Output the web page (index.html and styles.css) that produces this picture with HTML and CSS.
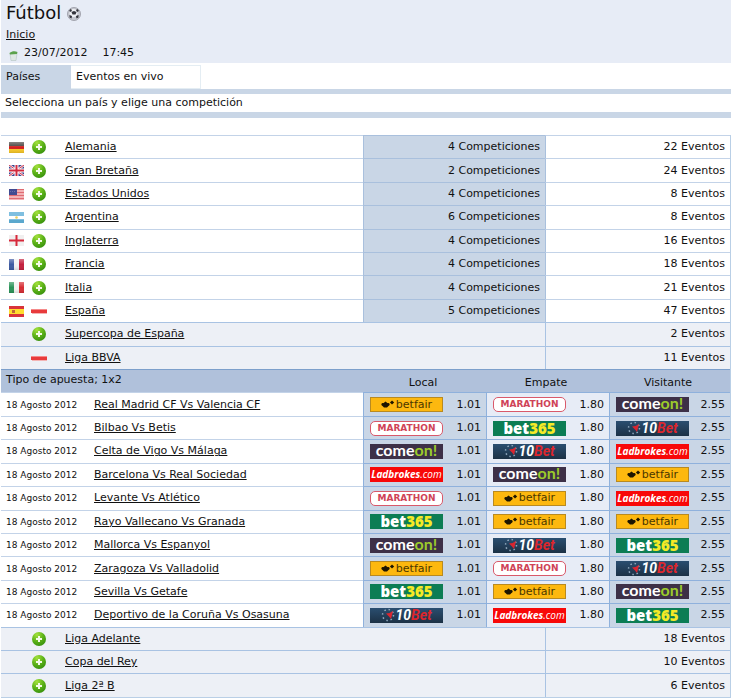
FILE: index.html
```html
<!DOCTYPE html>
<html lang="es">
<head>
<meta charset="utf-8">
<title>Fútbol</title>
<link rel="stylesheet" href="styles.css">
</head>
<body>
<svg class="sprites" aria-hidden="true">
  <defs>
    <radialGradient id="green" cx="35%" cy="20%" r="85%"><stop offset="0" stop-color="#a4e23c"/><stop offset=".55" stop-color="#5cb218"/><stop offset="1" stop-color="#37900c"/></radialGradient>
    <linearGradient id="shine" x1="0" y1="0" x2="0" y2="1"><stop offset="0" stop-color="#fff" stop-opacity=".35"/><stop offset=".5" stop-color="#fff" stop-opacity="0"/><stop offset="1" stop-color="#000" stop-opacity=".12"/></linearGradient>
  </defs>
  <symbol id="plus" viewBox="0 0 16 16"><circle cx="8" cy="8" r="7" fill="url(#green)"/><path d="M8 5v6M5 8h6" stroke="#f4fbe9" stroke-width="2"/></symbol>
  <symbol id="minus" viewBox="0 0 16 16"><path d="M0 6h16v4H0z" fill="#e83a3c"/><path d="M0 6h16v1H0z" fill="#f58a8a"/><path d="M1 10h15v1H1z" fill="#f3b4b4"/></symbol>
  <symbol id="de" viewBox="0 0 15 11"><path d="M0 0h15v4H0z" fill="#45403c"/><path d="M0 4h15v3H0z" fill="#d3201f"/><path d="M0 7h15v4H0z" fill="#f8c828"/><path d="M0 0h15v11H0z" fill="url(#shine)"/></symbol>
  <symbol id="gb" viewBox="0 0 15 11"><path d="M0 0h15v11H0z" fill="#34418c"/><path d="M0 0l15 11M15 0L0 11" stroke="#f3dfe6" stroke-width="2.6"/><path d="M0 0l15 11M15 0L0 11" stroke="#cf3a50"/><path d="M7.500 0v11M0 5.500h15" stroke="#fff" stroke-width="4"/><path d="M7.500 0v11M0 5.500h15" stroke="#d22a3e" stroke-width="2"/></symbol>
  <symbol id="us" viewBox="0 0 15 11"><path d="M0 0h15v11H0z" fill="#f2b2b5"/><path d="M0 .5h15M0 3.500h15M0 6.500h15M0 9.500h15" stroke="#df6b72"/><path d="M0 0h8v6H0z" fill="#414b91"/><path d="M1 2.500h6" stroke="#6870ab" stroke-dasharray="1 1"/></symbol>
  <symbol id="ar" viewBox="0 0 15 11"><path d="M0 0h15v11H0z" fill="#7fbfe0"/><path d="M0 4h15v3H0z" fill="#fff"/><circle cx="7.500" cy="5.500" r="1.300" fill="#e8d060"/><path d="M0 8h15v3H0z" fill="#5ba8cd"/></symbol>
  <symbol id="en" viewBox="0 0 15 11"><path d="M0 0h15v11H0z" fill="#f1efef"/><path d="M7.500 0v11M0 5.500h15" stroke="#d7283a" stroke-width="2"/></symbol>
  <symbol id="fr" viewBox="0 0 15 11"><path d="M0 0h5v11H0z" fill="#3d5aa2"/><path d="M5 0h5v11H5z" fill="#f1f1f3"/><path d="M10 0h5v11h-5z" fill="#c4203e"/><path d="M0 0h15v11H0z" fill="url(#shine)"/></symbol>
  <symbol id="it" viewBox="0 0 15 11"><path d="M0 0h5v11H0z" fill="#2a9358"/><path d="M5 0h5v11H5z" fill="#f3f3f1"/><path d="M10 0h5v11h-5z" fill="#d72d34"/><path d="M0 0h15v11H0z" fill="url(#shine)"/></symbol>
  <symbol id="es" viewBox="0 0 15 11"><path d="M0 0h15v11H0z" fill="#d9333a"/><path d="M0 3h15v5H0z" fill="#ffdd2e"/><path d="M3 4h3v3H3z" fill="#c06a35"/></symbol>
  <symbol id="arrows" viewBox="0 0 14 9"><path d="M1.500 4L4.500 1.500 7.500 4v2L6 7.500H3L1.500 6z" fill="#1d1500"/><circle cx="1.800" cy="4.500" r="1.400" fill="#1d1500"/><circle cx="7.200" cy="4.500" r="1.400" fill="#1d1500"/><path d="M11 .5L13.200 2.500 11 4.500 8.900 2.500z" fill="#1d1500"/></symbol>
  <symbol id="stars" viewBox="0 0 14 14"><circle cx="7" cy="7" r="5.500" fill="none" stroke="#8fa8bd" stroke-width="1.500" stroke-dasharray="1.500 2.800"/><path d="M5 5.500l3.500-.5L12 3l-1 4-1 4-2-2.500z" fill="#d82630"/></symbol>
</svg>

<header class="top">
  <h1 class="title">Fútbol
    <svg class="ball" viewBox="0 0 14 14" aria-hidden="true"><circle cx="7" cy="7" r="6.500" fill="#c6c8d0" stroke="#a2a4ae"/><circle cx="6.500" cy="6" r="4" fill="#eff0f4"/><path d="M4.500 5l2.500-1 2.500 1-1 2.500H5.500zM2 4l1.500-2 1.500 1-1 2zM12 4l-1.500-2L9 3l1 2zM2.500 8L5 9l-.5 2.500-2-1zM11.500 8L9 9l.5 2.500 2-1z" fill="#33343b"/></svg>
  </h1>
  <a class="home" href="#">Inicio</a>
  <p class="when">
    <svg class="bin" viewBox="0 0 9 11" aria-hidden="true"><path d="M1 3h7l-1 7H2z" fill="#dfe8e4" stroke="#b3c4c2" stroke-width=".6"/><path d="M.5 2.500C3 .5 6 .5 8.500 1.500l-.5 2L1 4z" fill="#5ca24c"/></svg>
    <span>23/07/2012</span><span class="time">17:45</span>
  </p>
</header>
<nav class="tabs">
  <a class="tab current" href="#">Países</a>
  <a class="tab live" href="#">Eventos en vivo</a>
</nav>
<p class="hint">Selecciona un país y elige una competición</p>

<main class="board">
<table class="list">
  <colgroup><col class="c-icons"><col class="c-date"><col class="c-match"><col class="c-local"><col class="c-draw-a"><col class="c-draw-b"><col class="c-away"></colgroup>
  <tbody>
  <tr><td><div class="icons"><svg class="flag"><use href="#de"/></svg><button class="toggle" aria-label="Abrir Alemania"><svg><use href="#plus"/></svg></button></div></td><td class="name" colspan="2"><a href="#">Alemania</a></td><td class="comps" colspan="2">4 Competiciones</td><td class="events" colspan="2">22 Eventos</td></tr>
  <tr><td><div class="icons"><svg class="flag"><use href="#gb"/></svg><button class="toggle" aria-label="Abrir Gran Bretaña"><svg><use href="#plus"/></svg></button></div></td><td class="name" colspan="2"><a href="#">Gran Bretaña</a></td><td class="comps" colspan="2">2 Competiciones</td><td class="events" colspan="2">24 Eventos</td></tr>
  <tr><td><div class="icons"><svg class="flag"><use href="#us"/></svg><button class="toggle" aria-label="Abrir Estados Unidos"><svg><use href="#plus"/></svg></button></div></td><td class="name" colspan="2"><a href="#">Estados Unidos</a></td><td class="comps" colspan="2">4 Competiciones</td><td class="events" colspan="2">8 Eventos</td></tr>
  <tr><td><div class="icons"><svg class="flag"><use href="#ar"/></svg><button class="toggle" aria-label="Abrir Argentina"><svg><use href="#plus"/></svg></button></div></td><td class="name" colspan="2"><a href="#">Argentina</a></td><td class="comps" colspan="2">6 Competiciones</td><td class="events" colspan="2">8 Eventos</td></tr>
  <tr><td><div class="icons"><svg class="flag"><use href="#en"/></svg><button class="toggle" aria-label="Abrir Inglaterra"><svg><use href="#plus"/></svg></button></div></td><td class="name" colspan="2"><a href="#">Inglaterra</a></td><td class="comps" colspan="2">4 Competiciones</td><td class="events" colspan="2">16 Eventos</td></tr>
  <tr><td><div class="icons"><svg class="flag"><use href="#fr"/></svg><button class="toggle" aria-label="Abrir Francia"><svg><use href="#plus"/></svg></button></div></td><td class="name" colspan="2"><a href="#">Francia</a></td><td class="comps" colspan="2">4 Competiciones</td><td class="events" colspan="2">18 Eventos</td></tr>
  <tr><td><div class="icons"><svg class="flag"><use href="#it"/></svg><button class="toggle" aria-label="Abrir Italia"><svg><use href="#plus"/></svg></button></div></td><td class="name" colspan="2"><a href="#">Italia</a></td><td class="comps" colspan="2">4 Competiciones</td><td class="events" colspan="2">21 Eventos</td></tr>
  <tr><td><div class="icons"><svg class="flag"><use href="#es"/></svg><button class="toggle" aria-label="Cerrar España"><svg><use href="#minus"/></svg></button></div></td><td class="name" colspan="2"><a href="#">España</a></td><td class="comps" colspan="2">5 Competiciones</td><td class="events" colspan="2">47 Eventos</td></tr>
  <tr class="league"><td><div class="icons"><button class="toggle" aria-label="Abrir Supercopa de España"><svg><use href="#plus"/></svg></button></div></td><td class="name" colspan="4"><a href="#">Supercopa de España</a></td><td class="events" colspan="2">2 Eventos</td></tr>
  <tr class="league"><td><div class="icons"><button class="toggle" aria-label="Cerrar Liga BBVA"><svg><use href="#minus"/></svg></button></div></td><td class="name" colspan="4"><a href="#">Liga BBVA</a></td><td class="events" colspan="2">11 Eventos</td></tr>
  <tr class="bets"><th class="kind" colspan="3">Tipo de apuesta; 1x2</th><th>Local</th><th colspan="2">Empate</th><th>Visitante</th></tr>
  <tr><td class="date" colspan="2">18 Agosto 2012</td><td><a href="#">Real Madrid CF Vs Valencia CF</a></td><td class="odd"><div><span class="logo betfair"><svg><use href="#arrows"/></svg>betfair</span>1.01</div></td><td class="odd draw" colspan="2"><div><span class="logo marathon">MARATHON</span>1.80</div></td><td class="odd"><div><span class="logo comeon">come<b>on!</b></span>2.55</div></td></tr>
  <tr><td class="date" colspan="2">18 Agosto 2012</td><td><a href="#">Bilbao Vs Betis</a></td><td class="odd"><div><span class="logo marathon">MARATHON</span>1.01</div></td><td class="odd draw" colspan="2"><div><span class="logo bet365">bet<b>365</b></span>1.80</div></td><td class="odd"><div><span class="logo tenbet"><svg><use href="#stars"/></svg>10<b>Bet</b></span>2.55</div></td></tr>
  <tr><td class="date" colspan="2">18 Agosto 2012</td><td><a href="#">Celta de Vigo Vs Málaga</a></td><td class="odd"><div><span class="logo comeon">come<b>on!</b></span>1.01</div></td><td class="odd draw" colspan="2"><div><span class="logo tenbet"><svg><use href="#stars"/></svg>10<b>Bet</b></span>1.80</div></td><td class="odd"><div><span class="logo ladbrokes">Ladbrokes<b>.com</b></span>2.55</div></td></tr>
  <tr><td class="date" colspan="2">18 Agosto 2012</td><td><a href="#">Barcelona Vs Real Sociedad</a></td><td class="odd"><div><span class="logo ladbrokes">Ladbrokes<b>.com</b></span>1.01</div></td><td class="odd draw" colspan="2"><div><span class="logo comeon">come<b>on!</b></span>1.80</div></td><td class="odd"><div><span class="logo betfair"><svg><use href="#arrows"/></svg>betfair</span>2.55</div></td></tr>
  <tr><td class="date" colspan="2">18 Agosto 2012</td><td><a href="#">Levante Vs Atlético</a></td><td class="odd"><div><span class="logo marathon">MARATHON</span>1.01</div></td><td class="odd draw" colspan="2"><div><span class="logo betfair"><svg><use href="#arrows"/></svg>betfair</span>1.80</div></td><td class="odd"><div><span class="logo ladbrokes">Ladbrokes<b>.com</b></span>2.55</div></td></tr>
  <tr><td class="date" colspan="2">18 Agosto 2012</td><td><a href="#">Rayo Vallecano Vs Granada</a></td><td class="odd"><div><span class="logo bet365">bet<b>365</b></span>1.01</div></td><td class="odd draw" colspan="2"><div><span class="logo betfair"><svg><use href="#arrows"/></svg>betfair</span>1.80</div></td><td class="odd"><div><span class="logo betfair"><svg><use href="#arrows"/></svg>betfair</span>2.55</div></td></tr>
  <tr><td class="date" colspan="2">18 Agosto 2012</td><td><a href="#">Mallorca Vs Espanyol</a></td><td class="odd"><div><span class="logo comeon">come<b>on!</b></span>1.01</div></td><td class="odd draw" colspan="2"><div><span class="logo tenbet"><svg><use href="#stars"/></svg>10<b>Bet</b></span>1.80</div></td><td class="odd"><div><span class="logo bet365">bet<b>365</b></span>2.55</div></td></tr>
  <tr><td class="date" colspan="2">18 Agosto 2012</td><td><a href="#">Zaragoza Vs Valladolid</a></td><td class="odd"><div><span class="logo betfair"><svg><use href="#arrows"/></svg>betfair</span>1.01</div></td><td class="odd draw" colspan="2"><div><span class="logo marathon">MARATHON</span>1.80</div></td><td class="odd"><div><span class="logo tenbet"><svg><use href="#stars"/></svg>10<b>Bet</b></span>2.55</div></td></tr>
  <tr><td class="date" colspan="2">18 Agosto 2012</td><td><a href="#">Sevilla Vs Getafe</a></td><td class="odd"><div><span class="logo bet365">bet<b>365</b></span>1.01</div></td><td class="odd draw" colspan="2"><div><span class="logo betfair"><svg><use href="#arrows"/></svg>betfair</span>1.80</div></td><td class="odd"><div><span class="logo comeon">come<b>on!</b></span>2.55</div></td></tr>
  <tr><td class="date" colspan="2">18 Agosto 2012</td><td><a href="#">Deportivo de la Coruña Vs Osasuna</a></td><td class="odd"><div><span class="logo tenbet"><svg><use href="#stars"/></svg>10<b>Bet</b></span>1.01</div></td><td class="odd draw" colspan="2"><div><span class="logo ladbrokes">Ladbrokes<b>.com</b></span>1.80</div></td><td class="odd"><div><span class="logo bet365">bet<b>365</b></span>2.55</div></td></tr>
  <tr class="league"><td><div class="icons"><button class="toggle" aria-label="Abrir Liga Adelante"><svg><use href="#plus"/></svg></button></div></td><td class="name" colspan="4"><a href="#">Liga Adelante</a></td><td class="events" colspan="2">18 Eventos</td></tr>
  <tr class="league"><td><div class="icons"><button class="toggle" aria-label="Abrir Copa del Rey"><svg><use href="#plus"/></svg></button></div></td><td class="name" colspan="4"><a href="#">Copa del Rey</a></td><td class="events" colspan="2">10 Eventos</td></tr>
  <tr class="league"><td><div class="icons"><button class="toggle" aria-label="Abrir Liga 2ª B"><svg><use href="#plus"/></svg></button></div></td><td class="name" colspan="4"><a href="#">Liga 2ª B</a></td><td class="events" colspan="2">6 Eventos</td></tr>
  </tbody>
</table>
</main>
</body>
</html>
```
FILE: styles.css
```css
* { box-sizing: border-box; }
body {
  margin: 0;
  padding: 0 0 0 1px;
  min-height: 100vh;
  display: flex;
  flex-direction: column;
  font: 11px/14px Verdana, "DejaVu Sans", sans-serif;
  color: #111;
  background: #fff;
}
a { color: inherit; text-underline-offset: 1px; }
.sprites { position: absolute; width: 0; height: 0; }

.top { background: #e7ecf6; padding: 2px 5px 1px; }
.title {
  margin: 0;
  display: flex;
  align-items: center;
  gap: 6px;
  font-size: 18px;
  line-height: 22px;
  font-weight: normal;
}
.ball { width: 14px; height: 14px; margin-top: 2px; }
.home { display: block; margin-top: 4px; width: fit-content; }
.when { margin: 4px 0 0 3px; display: flex; gap: 6px; }
.bin { width: 9px; height: 12px; margin-top: 4px; }
.time { margin-left: 9px; }

.tabs { display: flex; margin-top: 2px; border-bottom: 5px solid #c9d6e6; }
.tab { text-decoration: none; padding: 5px; height: 24px; }
.current { width: 70px; background: #c9d6e6; }
.live { width: 130px; border: 1px solid #e4edf3; border-left: 0; padding-top: 4px; }
.hint { margin: 0; padding: 2px 4px; border-bottom: 6px solid #c9d6e6; }

.board { flex: 1; display: grid; margin-top: 17px; }
.list {
  width: 100%;
  height: 100%;
  table-layout: fixed;
  border-spacing: 0;
  border: solid #b9cfe6;
  border-width: 0 1px 1px 0;
}
.c-icons { width: 57px; }
.c-date { width: 30px; }
.c-local { width: 123px; }
.c-draw-a { width: 59px; }
.c-draw-b { width: 64px; }
.c-away { width: 121px; }

td, th {
  height: 23px;
  padding: 0 5px;
  border-top: 1px solid #c3d3e8;
  text-align: left;
  vertical-align: middle;
  font-weight: normal;
  white-space: nowrap;
}
.icons { display: flex; justify-content: flex-end; align-items: center; gap: 7px; margin-right: 6px; }
.flag { width: 15px; height: 11px; }
.toggle { width: 16px; height: 16px; padding: 0; border: 0; background: none; }
.toggle svg { display: block; width: 16px; height: 16px; }
.name { padding-left: 7px; }
.comps, .events { text-align: right; border-left: 1px solid #a9c0dd; }
.comps { background: #c9d6e6; border-color: #a9c0dd; }
.league td { background: #edf0f6; border-color: #a9c3e3; }
.bets th { background: #b0c1db; border-top-color: #7c9fcb; text-align: center; vertical-align: bottom; padding: 0 8px 2px 5px; }
.bets .kind { text-align: left; vertical-align: middle; }
.date { font-size: 9px; }
td.date + td { padding-left: 6px; }
.odd { padding-left: 6px; background: #c9d6e6; border-left: 1px solid #8fb1dc; border-color: #8fb1dc; }
.draw { background: #e7ecf6; }
.odd div { display: flex; justify-content: space-between; align-items: center; }

.logo {
  display: flex;
  justify-content: center;
  align-items: center;
  width: 73px;
  height: 15px;
  color: #fff;
  line-height: 15px;
}
.logo b { font-weight: inherit; }
.betfair { background: #fdb80f; border: 1px solid #b98a20; color: #4b3700; font-size: 11px; line-height: 12px; gap: 1px; }
.betfair svg { width: 14px; height: 9px; }
.marathon { background: #fff; border: 1px solid #d9596a; border-radius: 5px; color: #cf4358; font-size: 9px; font-weight: bold; line-height: 13px; }
.comeon { background: #3d3047; padding-bottom: 3px; font: bold 16px/12px Lato, sans-serif; }
.comeon b { color: #9bcb2b; }
.bet365 { background: #0c7d54; padding-bottom: 1px; font: 800 15px/14px "Open Sans", sans-serif; }
.bet365 b { color: #f6ea26; }
.tenbet { background: linear-gradient(#2a4e70, #1c3145); font: italic bold 14px/15px "Liberation Sans Narrow", Roboto, sans-serif; }
.tenbet svg { width: 14px; height: 14px; }
.tenbet b { color: #dd262c; }
.ladbrokes { background: #f80808; font: italic bold 10px/15px "Open Sans", sans-serif; }
.ladbrokes b { font-weight: normal; }
```
